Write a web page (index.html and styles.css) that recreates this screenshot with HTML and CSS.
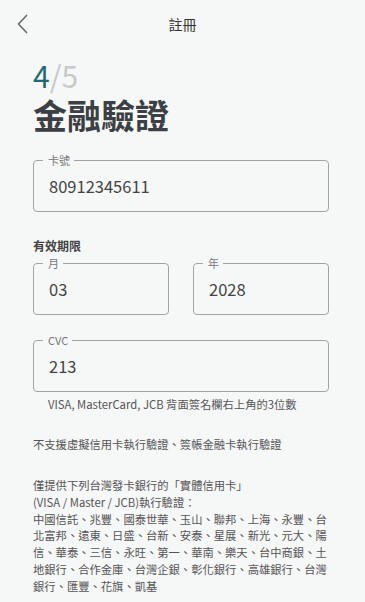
FILE: index.html
```html
<!DOCTYPE html>
<html>
<head>
<title>註冊</title>
<link rel="stylesheet" href="styles.css">
</head>
<body>

<div class="topbar">
  <button class="back" aria-label="返回">
    <svg width="11" height="20" viewBox="0 0 11 20"><polyline points="10,1 1.5,10 10,19" fill="none" stroke="#666" stroke-width="1.5"/></svg>
  </button>
  <div class="topbar-title">註冊</div>
  <div></div>
</div>

<div class="content">
  <div class="step"><span class="step-now">4</span><span class="step-total">/5</span></div>
  <h1 class="title">金融驗證</h1>

  <fieldset class="field field-card">
    <legend>卡號</legend>
    <div class="field-value">80912345611</div>
  </fieldset>

  <div class="group-label">有效期限</div>
  <div class="expiry">
    <fieldset class="field">
      <legend>月</legend>
      <div class="field-value">03</div>
    </fieldset>
    <fieldset class="field">
      <legend>年</legend>
      <div class="field-value">2028</div>
    </fieldset>
  </div>

  <fieldset class="field field-cvc">
    <legend>CVC</legend>
    <div class="field-value">213</div>
  </fieldset>
  <div class="hint">VISA, MasterCard, JCB 背面簽名欄右上角的3位數</div>

  <p class="note">不支援虛擬信用卡執行驗證、簽帳金融卡執行驗證</p>

  <p class="note note-banks">僅提供下列台灣發卡銀行的「實體信用卡」<br>(VISA / Master / JCB)執行驗證：<br>中國信託、兆豐、國泰世華、玉山、聯邦、上海、永豐、台<br>北富邦、遠東、日盛、台新、安泰、星展、新光、元大、陽<br>信、華泰、三信、永旺、第一、華南、樂天、台中商銀、土<br>地銀行、合作金庫、台灣企銀、彰化銀行、高雄銀行、台灣<br>銀行、匯豐、花旗、凱基</p>
</div>

</body>
</html>
```

FILE: styles.css
```css
body {
  margin: 0;
  background: #f6f7f7;
  font-family: "Noto Sans CJK TC", "Noto Sans", sans-serif;
  color: #444;
}

.topbar {
  display: grid;
  grid-template-columns: 48px 1fr 48px;
  align-items: center;
  height: 48px;
}

.back {
  display: flex;
  align-items: center;
  height: 48px;
  padding: 0 0 0 17px;
  border: none;
  background: none;
}

.topbar-title {
  text-align: center;
  font-size: 14px;
  color: #333;
}

.content {
  padding: 0 36px 0 33px;
}

.step {
  margin-top: 10px;
  font-size: 30px;
  line-height: 34px;
}

.step-now {
  color: #1d6b74;
}

.step-total {
  color: #c6cacb;
}

.title {
  margin: 3px 0 0;
  font-size: 34px;
  line-height: 40px;
  font-weight: bold;
  color: #3c4044;
}

.field {
  margin: 0;
  padding: 0 15px;
  border: 1px solid #a3a3a3;
  border-radius: 4px;
  min-width: 0;
}

.field legend {
  margin-left: -6px;
  padding: 0 4px 0 5px;
  font-size: 11px;
  line-height: 14px;
  color: #777;
}

.field-value {
  padding: 8px 0 14px;
  font-size: 16.5px;
  line-height: 22px;
  color: #444;
}

.field-card {
  margin-top: 18px;
}

.group-label {
  margin-top: 26px;
  font-size: 12px;
  line-height: 16px;
  font-weight: bold;
  color: #444;
}

.expiry {
  display: grid;
  grid-template-columns: 1fr 1fr;
  gap: 24px;
  margin-top: 2px;
}

.field-cvc {
  margin-top: 18px;
}

.hint {
  margin-top: 4px;
  padding-left: 15px;
  font-size: 11.3px;
  line-height: 16px;
  color: #555;
}

.note {
  margin: 24px 0 0;
  font-size: 11.3px;
  line-height: 16px;
  color: #555;
}

.note-banks {
  margin-top: 25px;
  line-height: 16.8px;
}
```
